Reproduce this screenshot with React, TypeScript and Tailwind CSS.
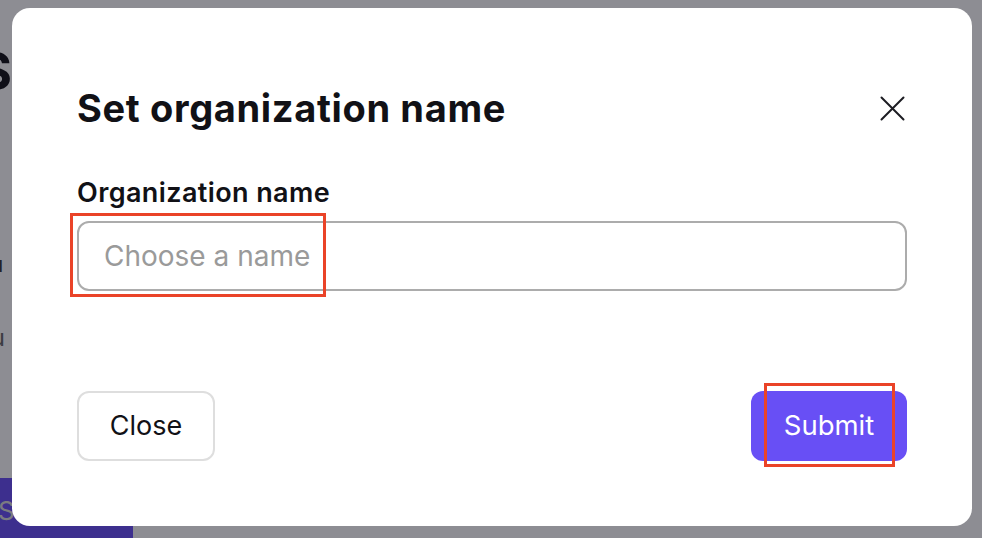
import React from "react";

function CloseIcon() {
  return (
    <svg width="25" height="25" viewBox="0 0 25 25" fill="none" stroke="#1c1c22" strokeWidth="2" strokeLinecap="round">
      <path d="M1.5 1.5L23.5 23.5M23.5 1.5L1.5 23.5" />
    </svg>
  );
}

export default function App() {
  return (
    <div
      className="relative w-[982px] h-[538px] overflow-hidden bg-white"
      style={{ fontFamily: "Inter, 'Noto Sans', sans-serif" }}
    >
      {/* page behind the dialog */}
      <div className="flex flex-col h-full ml-[-22px]">
        <h1 className="mt-[44px] text-[52px] font-bold leading-[56px] text-[#111118]">Sc</h1>
        <p className="mt-[150px] text-[22px] text-[#333] leading-[28px] pl-[20px]">ı</p>
        <p className="mt-[45px] text-[24px] text-[#666] leading-[30px]">su</p>
        <div className="mt-auto w-[155px] h-[60px] bg-[#684ff5] text-[#ddd] text-[26px] pt-[18px] pl-[20px] leading-[30px]">
          Supp
        </div>
      </div>

      {/* backdrop */}
      <div className="absolute inset-0 bg-[rgba(13,13,25,0.47)]" />

      {/* dialog */}
      <div className="absolute left-[12px] top-[8px] w-[960px] h-[518px] rounded-[18px] bg-white px-[65px] pt-[78px] flex flex-col">
        <div className="flex items-center justify-between">
          <h2 className="text-[38px] font-bold leading-[44px] text-[#111116] tracking-[0.65px]">
            Set organization name
          </h2>
          <div className="mr-[2px]">
            <CloseIcon />
          </div>
        </div>

        <label className="mt-[47px] text-[27px] font-semibold leading-[32px] text-[#111116] tracking-[0.4px]">
          Organization name
        </label>
        <div className="relative mt-[12px]">
          <input
            placeholder="Choose a name"
            className="w-full h-[70px] rounded-[12px] border-2 border-[#acacac] px-[25px] text-[28px] text-[#111] placeholder:text-[#9a9a9a] outline-none"
          />
          <div className="absolute left-[-7px] top-[-8px] w-[256px] h-[84px] border-[3px] border-[#ea4328] pointer-events-none" />
        </div>

        <div className="mt-[100px] flex items-center justify-between">
          <button className="h-[70px] w-[138px] rounded-[12px] border-2 border-[#dedede] text-[27px] text-[#111116]">
            Close
          </button>
          <div className="relative">
            <button className="h-[70px] w-[156px] rounded-[12px] bg-[#684ff5] text-[27.5px] text-white">
              Submit
            </button>
            <div className="absolute left-[13px] top-[-8px] w-[131px] h-[84px] border-[3px] border-[#ea4328] pointer-events-none" />
          </div>
        </div>
      </div>
    </div>
  );
}
